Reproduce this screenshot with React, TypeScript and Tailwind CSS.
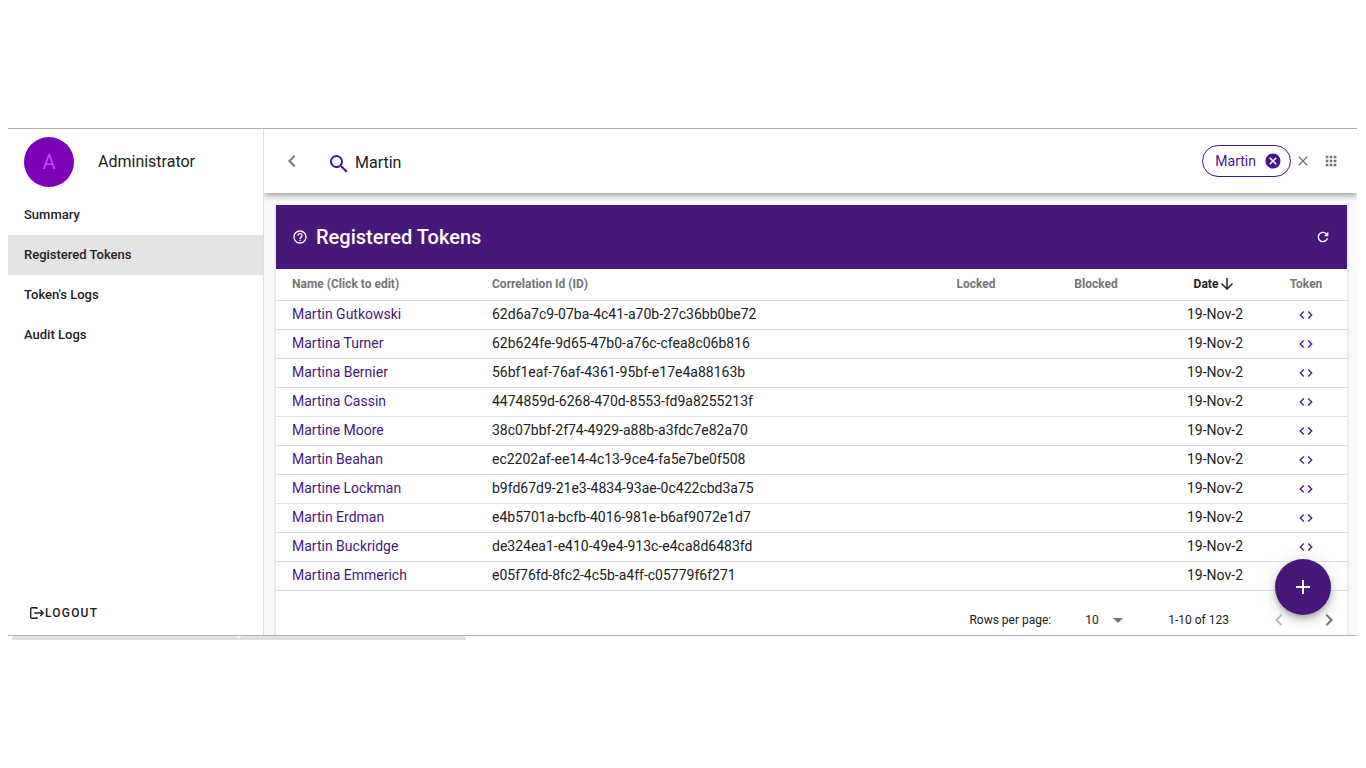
import React from "react";
import {
  MdAdd,
  MdApps,
  MdArrowDownward,
  MdArrowDropDown,
  MdCancel,
  MdChevronLeft,
  MdChevronRight,
  MdClose,
  MdCode,
  MdHelpOutline,
  MdRefresh,
  MdSearch,
} from "react-icons/md";

const navItems = ["Summary", "Registered Tokens", "Token's Logs", "Audit Logs"];

const tokens = [
  { name: "Martin Gutkowski", id: "62d6a7c9-07ba-4c41-a70b-27c36bb0be72" },
  { name: "Martina Turner", id: "62b624fe-9d65-47b0-a76c-cfea8c06b816" },
  { name: "Martina Bernier", id: "56bf1eaf-76af-4361-95bf-e17e4a88163b" },
  { name: "Martina Cassin", id: "4474859d-6268-470d-8553-fd9a8255213f" },
  { name: "Martine Moore", id: "38c07bbf-2f74-4929-a88b-a3fdc7e82a70" },
  { name: "Martin Beahan", id: "ec2202af-ee14-4c13-9ce4-fa5e7be0f508" },
  { name: "Martine Lockman", id: "b9fd67d9-21e3-4834-93ae-0c422cbd3a75" },
  { name: "Martin Erdman", id: "e4b5701a-bcfb-4016-981e-b6af9072e1d7" },
  { name: "Martin Buckridge", id: "de324ea1-e410-49e4-913c-e4ca8d6483fd" },
  { name: "Martina Emmerich", id: "e05f76fd-8fc2-4c5b-a4ff-c05779f6f271" },
];

function LogoutIcon() {
  return (
    <svg width="16" height="16" viewBox="0 0 16 16" fill="none" stroke="currentColor" strokeWidth="1.4" aria-hidden="true">
      <path d="M7.8 3.9V2.7H2.7Q1.7 2.7 1.7 3.7V12.3Q1.7 13.3 2.7 13.3H7.8V12.1" />
      <path d="M5.3 8H14M11.3 5.1L14.2 8L11.3 10.9" />
    </svg>
  );
}

function Sidebar() {
  return (
    <aside className="flex w-64 shrink-0 flex-col border-r border-[#e0e0e0] bg-white">
      <div className="flex items-center gap-6 px-4 py-2">
        <div className="flex size-[50px] items-center justify-center rounded-full bg-[#7b00b8] text-xl text-[#d042ff]">A</div>
        <span className="text-base">Administrator</span>
      </div>
      <nav>
        {navItems.map((item) => (
          <a
            key={item}
            href="#"
            className={
              item === "Registered Tokens"
                ? "flex h-10 items-center bg-[#e4e4e4] px-4 text-[13px] font-medium"
                : "flex h-10 items-center px-4 text-[13px] font-medium"
            }
          >
            {item}
          </a>
        ))}
      </nav>
      <button className="mt-auto mb-3 ml-[21px] flex h-5 items-center self-start text-xs font-medium tracking-widest">
        <LogoutIcon />
        LOGOUT
      </button>
    </aside>
  );
}

function TopBar() {
  return (
    <header className="z-10 flex h-16 shrink-0 items-center bg-white pr-[18px] pl-4 shadow-[0_2px_4px_-1px_rgba(0,0,0,0.2),0_4px_5px_0_rgba(0,0,0,0.14),0_1px_10px_0_rgba(0,0,0,0.12)]">
      <button aria-label="Back" className="text-[#757575]">
        <MdChevronLeft size={24} />
      </button>
      <label className="ml-[22px] flex grow items-center gap-1 pt-0.5 pl-px">
        <MdSearch size={24} className="mt-1 shrink-0 text-[#4a148c]" />
        <input aria-label="Search" defaultValue="Martin" className="h-8 w-full bg-transparent text-base outline-none" />
      </label>
      <div className="flex h-8 shrink-0 items-center gap-2 rounded-full border border-[#4a148c] pr-2 pl-3 text-sm text-[#4a148c]">
        Martin
        <button aria-label="Remove Martin">
          <MdCancel size={18} />
        </button>
      </div>
      <button aria-label="Clear filters" className="ml-1 text-[#757575]">
        <MdClose size={16} />
      </button>
      <button aria-label="Apps" className="ml-3 text-[#757575]">
        <MdApps size={16} />
      </button>
    </header>
  );
}

function TokenTable() {
  return (
    <table className="w-full table-fixed border-collapse text-sm">
      <colgroup>
        <col className="w-[200px]" />
        <col />
        <col className="w-[106px]" />
        <col className="w-[134px]" />
        <col className="w-[102px]" />
        <col className="w-[82px]" />
      </colgroup>
      <thead>
        <tr className="h-[31px] border-b border-[#e0e0e0] text-xs text-[#757575]">
          <th className="px-4 text-left font-bold">Name (Click to edit)</th>
          <th className="px-4 text-left font-bold">Correlation Id (ID)</th>
          <th className="font-bold">Locked</th>
          <th className="font-bold">Blocked</th>
          <th aria-sort="descending" className="pl-0.5">
            <button className="inline-flex items-center align-middle font-bold text-[#212121]">
              Date
              <MdArrowDownward size={18} />
            </button>
          </th>
          <th className="font-bold">Token</th>
        </tr>
      </thead>
      <tbody>
        {tokens.map((token) => (
          <tr key={token.id} className="h-[29px] border-b border-[#e0e0e0]">
            <td className="px-4 pb-0.5">
              <a href="#" className="text-[#46187a]">
                {token.name}
              </a>
            </td>
            <td className="px-4 pb-0.5">{token.id}</td>
            <td />
            <td />
            <td className="pb-0.5 pl-0.5 text-center">19-Nov-2</td>
            <td>
              <button aria-label="Show token" className="mx-auto block text-[#46187a]">
                <MdCode size={16} />
              </button>
            </td>
          </tr>
        ))}
      </tbody>
    </table>
  );
}

function Pagination() {
  return (
    <div className="flex h-[58px] items-center justify-end pr-[6px] text-xs">
      <label htmlFor="rows">Rows per page:</label>
      <div className="ml-[34px] grid items-center">
        <select id="rows" defaultValue="10" className="col-start-1 row-start-1 w-11 appearance-none bg-transparent">
          <option>10</option>
          <option>25</option>
          <option>50</option>
        </select>
        <MdArrowDropDown size={24} className="pointer-events-none col-start-1 row-start-1 ml-[21px] text-[#757575]" />
      </div>
      <span className="ml-[38px]">1-10 of 123</span>
      <button aria-label="Previous page" disabled className="ml-[38px] text-[#bdbdbd]">
        <MdChevronLeft size={24} />
      </button>
      <button aria-label="Next page" className="ml-[26px] text-[#757575]">
        <MdChevronRight size={24} />
      </button>
    </div>
  );
}

export default function App() {
  return (
    <div className="min-h-screen bg-white px-2 pt-32 font-['Roboto',sans-serif] text-[#212121]">
      <div className="relative mr-px flex h-[508px] overflow-hidden border-y border-[#b0b0b0]">
        <Sidebar />
        <main className="flex min-w-0 grow flex-col overflow-hidden bg-[#fafafa]">
          <TopBar />
          <section className="mt-3 mr-[10px] ml-3 shrink-0 bg-white shadow-[0_1px_3px_rgba(0,0,0,0.2)]">
            <div className="flex h-16 items-center gap-2 bg-[#46187a] px-4 text-white">
              <MdHelpOutline size={16} />
              <h1 className="grow text-xl font-medium">Registered Tokens</h1>
              <button aria-label="Refresh">
                <MdRefresh size={16} />
              </button>
            </div>
            <TokenTable />
            <Pagination />
          </section>
        </main>
        <button
          aria-label="Add token"
          className="absolute right-[26px] bottom-5 z-20 flex size-14 items-center justify-center rounded-full bg-[#46187a] text-white shadow-[0_3px_5px_-1px_rgba(0,0,0,0.2),0_6px_10px_0_rgba(0,0,0,0.14),0_1px_18px_0_rgba(0,0,0,0.12)]"
        >
          <MdAdd size={24} />
        </button>
      </div>
      <div className="ml-1 flex h-1">
        <div className="w-[227px] rounded-t-sm bg-[#e0e0e0]" />
        <div className="w-[227px] rounded-t-sm bg-[#dfdfe1]" />
      </div>
    </div>
  );
}
